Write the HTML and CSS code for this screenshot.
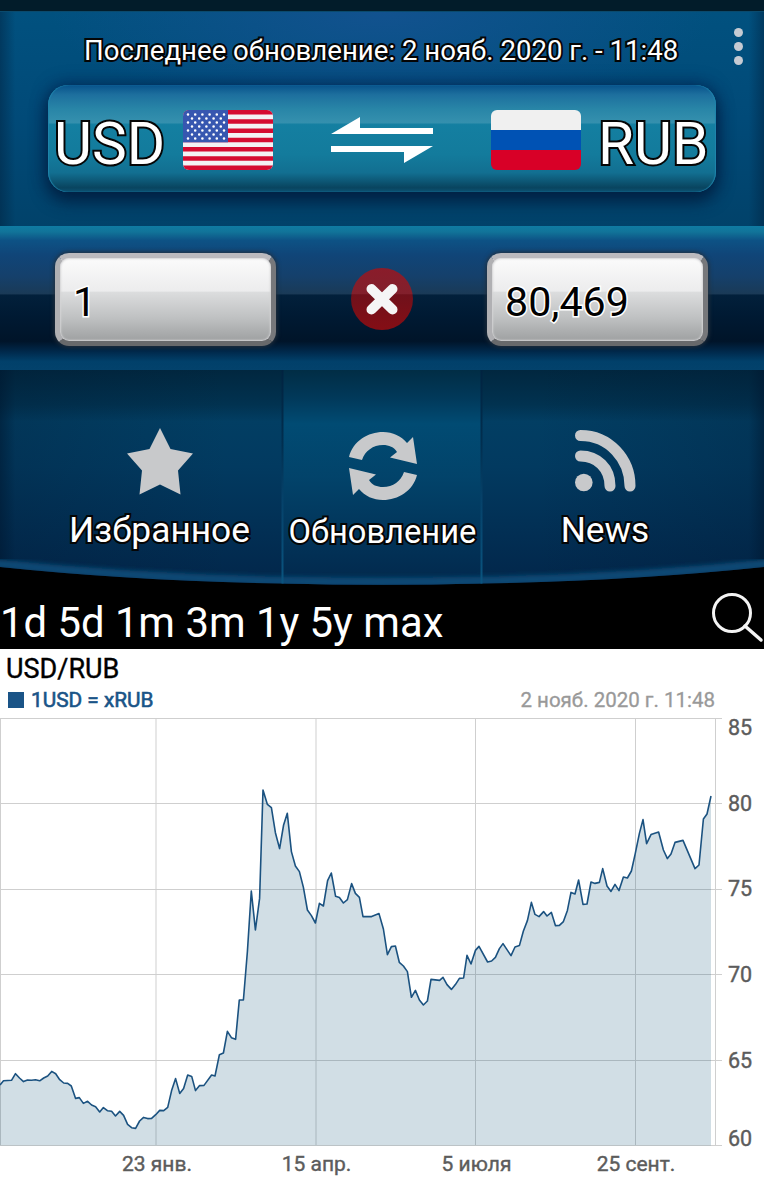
FILE: index.html
```html
<!DOCTYPE html>
<html lang="ru">
<head>
    <meta charset="UTF-8">
    <meta name="viewport" content="width=device-width, initial-scale=1.0">
    <title>USD/RUB</title>
    <link rel="stylesheet" href="styles.css">
</head>
<body>
    <div class="statusbar"></div>
    <header class="header">
        <div class="update-row">
            <span class="update outlined">Последнее обновление: 2 нояб. 2020 г. - 11:48</span>
            <div class="menu"><i></i><i></i><i></i></div>
        </div>
        <div class="pair">
            <span class="code outlined">USD</span>
            <svg class="flag flag-us" viewBox="0 0 90 60">
                <rect width="90" height="60" fill="#f3f1f4"/>
                <path d="M0 2.3h90M0 11.5h90M0 20.8h90M0 30h90M0 39.2h90M0 48.5h90M0 57.7h90" stroke="#d50b31" stroke-width="4.62"/>
                <rect width="45" height="32.3" fill="#3757b0"/>
                <path class="stars" d="M5 4.500H42M5 12.500H42M5 20.500H42M5 28.500H42"/>
                <path class="stars" d="M9 8.500H40M9 16.500H40M9 24.500H40"/>
            </svg>
            <svg class="swap" viewBox="0 0 102 46">
                <path d="M0 17 29 0v11h73v6zM0 29h102L73 46V35H0z" fill="#fff"/>
            </svg>
            <svg class="flag flag-ru" viewBox="0 0 90 60">
                <rect width="90" height="20" fill="#f0f0f0"/>
                <rect y="20" width="90" height="20" fill="#0052b4"/>
                <rect y="40" width="90" height="20" fill="#d80027"/>
            </svg>
            <span class="code outlined">RUB</span>
        </div>
    </header>

    <section class="amounts">
        <div class="field"><span>1</span></div>
        <svg class="clear" viewBox="0 0 62 62">
            <defs>
                <linearGradient id="red" x1="0" y1="0" x2="0" y2="1">
                    <stop offset="0" stop-color="#8a1c2a"/>
                    <stop offset=".42" stop-color="#82202c"/>
                    <stop offset=".43" stop-color="#70111b"/>
                    <stop offset="1" stop-color="#850e15"/>
                </linearGradient>
            </defs>
            <circle cx="31" cy="31" r="31" fill="url(#red)"/>
            <path d="M20.500 21 41.500 41.500M41.500 21 20.500 41.500" stroke="#f5f5f5" stroke-width="10" stroke-linecap="round"/>
        </svg>
        <div class="field"><span>80,469</span></div>
    </section>

    <nav class="actions">
        <svg class="panel" viewBox="0 0 764 215">
            <defs>
                <linearGradient id="side" x1="0" y1="0" x2="0" y2="1">
                    <stop offset="0" stop-color="#01273f"/>
                    <stop offset=".16" stop-color="#013250"/>
                    <stop offset=".24" stop-color="#023e63"/>
                    <stop offset=".45" stop-color="#023a60"/>
                    <stop offset="1" stop-color="#02264a"/>
                </linearGradient>
                <linearGradient id="mid" x1="0" y1="0" x2="0" y2="1">
                    <stop offset="0" stop-color="#012d45"/>
                    <stop offset=".13" stop-color="#01395a"/>
                    <stop offset=".25" stop-color="#014b73"/>
                    <stop offset=".5" stop-color="#02436a"/>
                    <stop offset="1" stop-color="#02284c"/>
                </linearGradient>
                <linearGradient id="shade">
                    <stop offset="0" stop-color="#00162e" stop-opacity=".6"/>
                    <stop offset=".02" stop-color="#00162e" stop-opacity=".2"/>
                    <stop offset=".3" stop-color="#00162e" stop-opacity="0"/>
                    <stop offset=".7" stop-color="#00162e" stop-opacity="0"/>
                    <stop offset=".98" stop-color="#00162e" stop-opacity=".2"/>
                    <stop offset="1" stop-color="#00162e" stop-opacity=".6"/>
                </linearGradient>
                <linearGradient id="divider" x1="0" y1="0" x2="0" y2="1">
                    <stop offset="0" stop-color="#012340"/>
                    <stop offset=".35" stop-color="#012f50"/>
                    <stop offset=".6" stop-color="#06426a"/>
                    <stop offset="1" stop-color="#0a5580"/>
                </linearGradient>
                <filter id="soft" x="-5%" y="-20%" width="110%" height="140%"><feGaussianBlur stdDeviation="2"/></filter>
                <clipPath id="hull"><path d="M0 0H764V197Q630 211 481 213.500Q382 216 283 213.500Q134 211 0 197z"/></clipPath>
            </defs>
            <g clip-path="url(#hull)">
                <rect width="764" height="215" fill="url(#side)"/>
                <rect x="283" width="199" height="215" fill="url(#mid)"/>
                <rect width="764" height="215" fill="url(#shade)"/>
                <path d="M-10 193Q134 208 283 211Q382 213 481 211Q630 208 774 193" fill="none" stroke="#094a74" stroke-width="9" filter="url(#soft)"/>
                <rect x="281.500" width="2" height="215" fill="url(#divider)"/>
                <rect x="480.500" width="2" height="215" fill="url(#divider)"/>
            </g>
        </svg>
        <a class="action">
            <svg class="icon" viewBox="0 0 66 67">
                <path d="M33 0 43.500 21 66 25.500 51 42.500 53.500 66.500 33 56.500 12.500 66.500 15 42.500 0 25.500 22.500 21z" fill="#c8c9cb"/>
            </svg>
            <span class="outlined">Избранное</span>
        </a>
        <a class="action action-refresh">
            <svg class="icon" viewBox="0 0 68 68">
                <g id="arrow" fill="#c8c9cb">
                    <path d="M0 25C4 9 19 0 34 0 44 0 52 4 58 11L64 5 68 32 41 25.500 48 20C45 15 40 13 34 13 24 13 16 19 13 28z"/>
                </g>
                <use href="#arrow" transform="rotate(180 34 34)"/>
            </svg>
            <span class="outlined">Обновление</span>
        </a>
        <a class="action">
            <svg class="icon" viewBox="0 0 61 62">
                <circle cx="8.800" cy="52.500" r="8.800" fill="#c8c9cb"/>
                <path d="M5.500 26C22 26 35 38 35 56M5.500 5.500C34 5.500 55 29 55 56" fill="none" stroke="#c8c9cb" stroke-width="11" stroke-linecap="round"/>
            </svg>
            <span class="outlined">News</span>
        </a>
    </nav>

    <div class="periods">
        <div class="period-list">
            <a>1d</a> <a>5d</a> <a>1m</a> <a>3m</a> <a>1y</a> <a>5y</a> <a>max</a>
        </div>
        <svg class="search" viewBox="0 0 52 52">
            <circle cx="20" cy="21" r="18.500" fill="none" stroke="#f4f4f4" stroke-width="3"/>
            <path d="M33 34 49 48" stroke="#f4f4f4" stroke-width="3.500" stroke-linecap="round"/>
        </svg>
    </div>

    <main class="chart">
        <h1>USD/RUB</h1>
        <div class="legend">
            <span class="series">1USD = xRUB</span>
            <span class="date">2 нояб. 2020 г. 11:48</span>
        </div>
        <svg class="plot" viewBox="0 712 764 488">
            <path class="grid" d="M0 718.500H722M0 803.500H722M0 889.500H722M0 974.500H722M0 1060.500H722M0 1145.500H722M.5 718V1145M156 718V1145M316 718V1145M475.500 718V1145M635.500 718V1145M715.500 718V1145"/>
            <path id="area" class="area"/>
            <polyline id="line" class="line" points="0,1085 3.5,1080.7 11.5,1080.3 15.5,1073.7 19.5,1078 23.5,1081.6 27.5,1080 31.5,1080.3 35.5,1079.8 39.7,1080.8 43.7,1078 47.7,1076 51.7,1071.4 55.7,1073.8 59.7,1079.7 63.7,1083 67.7,1083.4 71.3,1086 75.6,1098.4 79.3,1097.6 83.4,1103.4 87.6,1101.3 91.6,1105 95.6,1106.7 99.7,1112 103.4,1107.6 107.4,1110.7 111.6,1111.3 115.5,1116 119.7,1111.4 123.6,1115.4 127.6,1124.4 131.6,1127.7 135.6,1128.4 139.6,1121 143.6,1117.4 147.6,1118.6 151.6,1118.4 155.7,1114.7 159.7,1110.4 163.7,1110.6 167.7,1107.4 171.6,1090.6 175.6,1078.6 179.7,1093.4 183.6,1088.4 187.7,1075 191.7,1076.4 195.5,1090.6 199.6,1085.6 204,1085.4 211.6,1075 215,1076 219.4,1054.7 223.4,1053 227.4,1031.3 231.4,1037.7 235.6,1039.3 239.3,1000 243.4,1000 247.4,951.5 251.3,891 255.4,930 259.6,898.4 263,790 267.4,804.4 271.4,807.6 275.4,832.7 279.6,848.6 283.6,825 287.3,813.3 291.4,851.6 295.4,866 299.4,871.6 303.4,887.4 307.4,910 311.4,915.6 315.4,923 319.4,903.4 323.4,906 327.6,880.6 331.3,873 335.6,896.3 339.4,897.6 343.4,903 347.4,899.6 351.6,883.6 355.4,893.4 359.4,897.4 363,916.6 371.6,916.6 379,913.6 383.4,929 387.4,954.6 391.4,946.6 395.4,946 399.3,962.3 403.4,966 407.4,971.6 411.4,997.3 415.4,990.4 419.4,1000 423.4,1005 427.4,1001 431,979.4 439.6,980.4 443,977.4 447,984.6 451.4,989.4 455.4,984.6 459.4,978.4 463.6,978 467,955.4 471,964 475.4,950.4 479,946.4 487.6,962 491.6,961 495.4,957.4 499.4,948.6 503,943.6 511,955.6 515,947 519.4,945.6 523.4,931 527.4,920.6 531.4,902.4 535,914.4 539,916.6 543.6,911.6 547,916 551.4,912.4 555.4,925.6 559.4,925.4 563.4,921.6 567.4,910.4 571,892.4 575,894 578.6,880 583,904.4 587,904 591,882 595,883.4 599.4,882.4 602.7,868.6 607,886 611,891.4 615,884.4 619,890.6 623.4,877 627.4,878 631.4,871 635.3,853.4 639.4,833.4 643,819.6 646.6,843.6 651,834.6 658.6,832 663.4,850 667.4,858.6 671,854 675,842.4 683,840.4 695,868.6 699,865 703.4,819 707,814 711,796"/>
            <g class="labels">
                <text x="728" y="735">85</text>
                <text x="728" y="811">80</text>
                <text x="728" y="896">75</text>
                <text x="728" y="982">70</text>
                <text x="728" y="1068">65</text>
                <text x="728" y="1146">60</text>
            </g>
            <g class="labels labels-x">
                <text x="157" y="1171">23 янв.</text>
                <text x="316.500" y="1171">15 апр.</text>
                <text x="476.500" y="1171">5 июля</text>
                <text x="636" y="1171">25 сент.</text>
            </g>
        </svg>
    </main>

    <script>
        // Fill the area between the rate line and the bottom of the plot
        const points = document.getElementById('line').getAttribute('points');
        document.getElementById('area').setAttribute('d', `M0 1145.5L${points}L711 1145.5Z`);
    </script>
</body>
</html>
```
FILE: styles.css
```css
* {
    box-sizing: border-box;
}
body {
    margin: 0;
    width: 764px;
    height: 1200px;
    overflow: hidden;
    background-color: #fff;
    font-family: Roboto, sans-serif;
}
svg {
    display: block;
    flex: none;
}
.outlined {
    color: #fff;
    -webkit-text-stroke: 4px #050505;
    paint-order: stroke fill;
    white-space: nowrap;
}
.statusbar {
    height: 11px;
    background-color: #021c2a;
}
.header {
    height: 215px;
    border-top: 1px solid #0a4a6d;
    background: linear-gradient(90deg, rgba(0, 35, 65, 0.5), transparent 2%, transparent 98%, rgba(0, 35, 65, 0.5)),
        radial-gradient(ellipse 330px 110px at 50% 0, #12528f, rgba(18, 82, 143, 0)),
        linear-gradient(#01517f, #014a78 50%, #01426a);
}
.update-row {
    display: flex;
    height: 74px;
    padding: 0 18px 0 84px;
    justify-content: space-between;
}
.update {
    font-size: 27.6px;
    line-height: 32px;
    margin-top: 23px;
}
.menu {
    display: flex;
    flex-direction: column;
    gap: 5px;
    margin: 16px 3px 0 0;
}
.menu i {
    width: 9px;
    height: 9px;
    border-radius: 50%;
    background-color: #c6cbd3;
}
.pair {
    display: flex;
    align-items: center;
    width: 668px;
    height: 107px;
    margin: -1px 0 0 48px;
    padding: 2px 8px 0 6px;
    border-radius: 20px;
    background: linear-gradient(#07528a 0, #1d6f9e 9%, #2885a7 22%, #3590ae 35%, #147fa1 37%, #137b9c 65%, #126f91 82%, #09445f 96%, #0b5273);
    box-shadow: inset 1px 0 1px #2085ac, inset -1px 0 1px #2085ac, 0 8px 16px 2px rgba(0, 24, 55, 0.75), 0 -2px 16px rgba(0, 35, 85, 0.55);
}
.code {
    width: 111px;
    font-size: 58.5px;
    line-height: 64px;
    margin-top: 8px;
}
.flag {
    width: 90px;
    height: 60px;
    border-radius: 6px;
}
.flag-us {
    margin-left: 18px;
}
.stars {
    fill: none;
    stroke: #fff;
    stroke-width: 2.6;
    stroke-linecap: round;
    stroke-dasharray: 0 7.2;
}
.swap {
    width: 102px;
    height: 46px;
    margin: 0 58px;
}
.flag-ru {
    margin-right: 17px;
}
.amounts {
    display: flex;
    align-items: flex-start;
    justify-content: space-between;
    height: 144px;
    padding: 27px 56px 0 55px;
    background: linear-gradient(#0f7ba3 0, #117499 4%, #0d5285 10%, #104578 20%, #15406b 35%, #1a3a57 47%, #02203b 48%, #001a33 62%, #001429 80%, #00284a 87%, #01406a 94%, #03426c);
}
.field {
    display: flex;
    align-items: center;
    width: 221px;
    height: 93px;
    padding: 4px 0 0 13px;
    border: 5px solid;
    border-color: #bbbabe #77787b #68696b #b0b0b3;
    border-radius: 14px;
    background: linear-gradient(#fbfbfb, #ececed 40%, #dcddde 41%, #bfc1c2 72%, #9ea0a1);
    box-shadow: inset 0 0 2px 1px #d4d4d6, 0 0 4px 1px #24303c;
    font-size: 41.2px;
    color: #000;
}
.field span {
    -webkit-text-stroke: 3px #fff;
    paint-order: stroke fill;
}
.clear {
    width: 62px;
    height: 62px;
    margin-top: 15px;
}
.actions {
    position: relative;
    display: grid;
    grid-template-columns: 283px 199px 282px;
    height: 215px;
    background-color: #000;
}
.panel {
    position: absolute;
    top: 0;
    left: 0;
    width: 764px;
    height: 215px;
}
.action {
    position: relative;
    display: flex;
    flex-direction: column;
    align-items: center;
    padding: 58px 0 0 36px;
    font-size: 35.3px;
    line-height: 42px;
}
.action .icon {
    width: 66px;
    height: 67px;
    margin-bottom: 14px;
}
.action:last-child {
    padding: 60px 36px 0 0;
}
.action:last-child .icon {
    width: 61px;
    height: 62px;
    margin-bottom: 17px;
}
.action-refresh {
    padding: 62px 0 0;
    font-size: 32.7px;
}
.action-refresh .icon {
    width: 68px;
    height: 68px;
    margin-bottom: 11px;
}
.periods {
    display: flex;
    justify-content: space-between;
    height: 64px;
    padding: 7px 0 0;
    background-color: #000;
    color: #fff;
}
.period-list {
    padding-top: 1px;
    font-size: 41.8px;
    line-height: 59px;
}
.search {
    width: 52px;
    height: 52px;
}
.chart h1 {
    height: 36px;
    margin: 0;
    padding: 4px 0 0 6px;
    font-size: 27px;
    font-weight: 400;
    line-height: 32px;
    color: #000;
    -webkit-text-stroke: 0.4px #000;
}
.legend {
    display: flex;
    align-items: center;
    justify-content: space-between;
    height: 27px;
    padding: 2px 49px 0 8px;
    font-size: 20.5px;
    color: #999;
    -webkit-text-stroke: 0.3px;
}
.series {
    display: flex;
    align-items: center;
    gap: 7px;
    font-size: 20.8px;
    color: #1a5487;
    -webkit-text-stroke: 0.6px;
}
.series::before {
    content: "";
    width: 16px;
    height: 16px;
    background-color: #1a5487;
}
.plot {
    width: 764px;
    height: 488px;
}
.grid {
    fill: none;
    stroke: #cfcfcf;
}
.area {
    fill: #1b587d;
    fill-opacity: 0.2;
}
.line {
    fill: none;
    stroke: #1b5280;
    stroke-width: 1.6;
    stroke-linejoin: round;
}
.labels {
    font-size: 21.5px;
    fill: #5c5c5c;
    stroke: #5c5c5c;
    stroke-width: 0.4px;
}
.labels-x {
    font-size: 21px;
    text-anchor: middle;
}
```
